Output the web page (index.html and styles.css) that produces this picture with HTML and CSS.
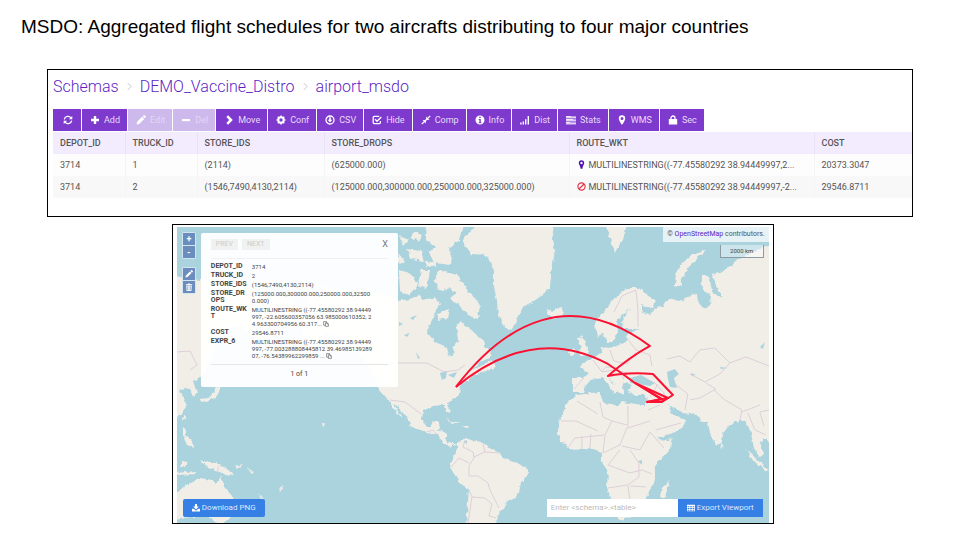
FILE: index.html
```
<!DOCTYPE html>
<html lang="en">
<head>
<meta charset="utf-8">
<title>MSDO flight schedules</title>
<link rel="stylesheet" href="styles.css">
</head>
<body>
<h1 class="title">MSDO: Aggregated flight schedules for two aircrafts distributing to four major countries</h1>

<section class="panel">
  <nav class="crumbs" aria-label="Breadcrumb">
    <a href="#">Schemas</a>
    <svg class="sep" viewBox="0 0 6 10"><path d="M1 1l4 4-4 4"/></svg>
    <a href="#">DEMO_Vaccine_Distro</a>
    <svg class="sep" viewBox="0 0 6 10"><path d="M1 1l4 4-4 4"/></svg>
    <a href="#">airport_msdo</a>
  </nav>
  <div class="toolbar">
    <button class="tool" aria-label="Refresh"><svg class="icon" viewBox="0 0 10 10"><path class="line" d="M1.3 4.4A3.7 3.7 0 0 1 8 3M8.7 5.6A3.7 3.7 0 0 1 2 7"/><path d="M9.3.9v3.4H5.9zM.7 9.1V5.7h3.4z"/></svg></button>
    <button class="tool"><svg class="icon" viewBox="0 0 10 10"><path d="M3.8 1h2.4v2.8H9v2.4H6.200V9H3.800V6.200H1V3.800h2.800z"/></svg>Add</button>
    <button class="tool" disabled><svg class="icon" viewBox="0 0 10 10"><path d="M.5 9.500l.6-2.700 5-5 2.100 2.100-5 5zM6.700 1.200l1-1q.5-.4 1 0l1.100 1.100q.4.500 0 1l-1 1z"/></svg>Edit</button>
    <button class="tool" disabled><svg class="icon" viewBox="0 0 10 10"><path d="M1 4h8v2.200H1z"/></svg>Del</button>
    <button class="tool"><svg class="icon" viewBox="0 0 10 10"><path d="M2.300 2L4.200.3 8.800 5 4.200 9.700 2.300 8 5.200 5z"/></svg>Move</button>
    <button class="tool"><svg class="icon" viewBox="0 0 10 10"><circle class="line gear" cx="5" cy="5" r="2.700"/><path class="line teeth" d="M5 .5v1.300M5 8.200v1.300M.5 5h1.300M8.200 5h1.300M1.800 1.800l1 1M7.200 7.200l1 1M1.800 8.200l1-1M7.200 2.800l1-1"/></svg>Conf</button>
    <button class="tool"><svg class="icon" viewBox="0 0 10 10"><circle class="line" cx="5" cy="5" r="4"/><path d="M4.200 2.300h1.600v2.500h1.500L5 7.400 2.700 4.800h1.500z"/></svg>CSV</button>
    <button class="tool"><svg class="icon" viewBox="0 0 10 10"><path class="line" d="M7.200 1.400H2.200q-1 0-1 1v5.200q0 1 1 1h5.200q1 0 1-1V6M3 4.300l2 2L9.300 2"/></svg>Hide</button>
    <button class="tool"><svg class="icon" viewBox="0 0 10 10"><path d="M5.200 1.600L6.500 2.800 8.700.5l.9.9-2.300 2.200 1.200 1.200-3.300.1zM4.800 8.400L3.500 7.200 1.300 9.500l-.9-.9 2.300-2.200-1.200-1.200 3.300-.1z"/><path class="line" d="M4 6l2-2"/></svg>Comp</button>
    <button class="tool"><svg class="icon" viewBox="0 0 10 10"><path fill-rule="evenodd" d="M5 .5a4.500 4.500 0 1 1 0 9 4.500 4.500 0 0 1 0-9zM4.200 1.700v1.400h1.600V1.700zM3.700 4v1h.7v2.200h-.7v1h2.700v-1h-.6V4z"/></svg>Info</button>
    <button class="tool"><svg class="icon" viewBox="0 0 10 10"><path d="M.2 7.600h1.400v1.900H.2zM2.600 6.500H4v3H2.600zM5 4.200h1.400v5.300H5zM7.600 1H9v8.500H7.600z"/></svg>Dist</button>
    <button class="tool"><svg class="icon" viewBox="0 0 10 10"><path class="soft" d="M0 1h10v2.200H0zM0 4h10v2.200H0zM0 7h10v2.200H0z"/><path d="M0 1h5v.8H0zM0 4h7v.8H0zM0 7h4v.8H0zM0 2.500h10v.7H0zM0 5.500h10v.7H0zM0 8.500h10v.7H0z"/></svg>Stats</button>
    <button class="tool"><svg class="icon" viewBox="0 0 10 10"><path fill-rule="evenodd" d="M5 .3a3.200 3.200 0 0 1 3.200 3.200C8.200 5.500 5.500 9.700 5 9.700S1.800 5.500 1.800 3.500A3.200 3.200 0 0 1 5 .3zM5 2a1.500 1.500 0 1 0 0 3 1.500 1.500 0 0 0 0-3z"/></svg>WMS</button>
    <button class="tool"><svg class="icon" viewBox="0 0 10 10"><path d="M.8 4h8.400V9.500H.8z"/><path class="line" d="M3 4.500V3a2 2 0 0 1 4 0v1.500"/></svg>Sec</button>
  </div>
  <table class="grid">
    <colgroup><col class="c-id"><col class="c-id"><col class="c-stores"><col class="c-wide"><col class="c-wide"><col></colgroup>
    <thead><tr><th>DEPOT_ID</th><th>TRUCK_ID</th><th>STORE_IDS</th><th>STORE_DROPS</th><th>ROUTE_WKT</th><th>COST</th></tr></thead>
    <tbody>
      <tr><td>3714</td><td>1</td><td>(2114)</td><td>(625000.000)</td><td><svg class="mark pin" viewBox="0 0 10 10"><path fill-rule="evenodd" d="M5 .3a3 3 0 0 1 3 3C8 5 6.200 6.500 6 9.700H4C3.800 6.500 2 5 2 3.300a3 3 0 0 1 3-3zM5 2a1.300 1.300 0 1 0 0 2.600A1.300 1.300 0 0 0 5 2z"/></svg>MULTILINESTRING((-77.45580292 38.94449997,2...</td><td>20373.3047</td></tr>
      <tr><td>3714</td><td>2</td><td>(1546,7490,4130,2114)</td><td>(125000.000,300000.000,250000.000,325000.000)</td><td><svg class="mark ban" viewBox="0 0 10 10"><circle cx="5" cy="5" r="4"/><path d="M2.200 7.800l5.600-5.600"/></svg>MULTILINESTRING((-77.45580292 38.94449997,-2...</td><td>29546.8711</td></tr>
    </tbody>
  </table>
</section>

<main class="map">
  <svg class="world" viewBox="177 227 592 296" role="img" aria-label="World map with two flight routes">
    <defs><filter id="coast" x="0" y="0" width="1" height="1" color-interpolation-filters="sRGB"><feTurbulence type="fractalNoise" baseFrequency=".2" numOctaves="2" seed="4"/><feDisplacementMap in="SourceGraphic" scale="5" xChannelSelector="R" yChannelSelector="G"/></filter></defs>
    <g class="land" filter="url(#coast)">
      <rect class="sea" x="170" y="220" width="606" height="310"/>
      <!-- North America -->
      <path d="M300 330L307 300 323 286 348 291 375 292 398 301 410 299 418 294 423 300 436 297 440 304 436 312 432 320 427 332 435 342 447 347 450 357 453 355 454 347 458 340 456 327 460 322 468 327 477 335 483 340 486 347 492 352 490 358 480 362 470 370 481 366 492 360 497 367 483 372 475 375 468 380 460 386 459 395 448 403 451 413 447 412 445 405 432 406 423 410 422 420 427 427 432 427 434 422 440 422 438 430 446 433 446 442 452 444 458 444 450 447 443 442 438 435 428 432 420 430 410 425 407 417 397 406 394 404 402 418 398 415 390 402 385 397 378 389 378 383 366 362 352 345 340 335 325 333 312 345z"/>
      <!-- South America -->
      <path d="M457 443L460 441 465 438 475 441 483 442 488 447 500 452 503 458 517 463 527 468 527 475 521 483 519 493 515 498 507 501 503 508 497 518 493 526H466L469 490 460 483 453 472 450 467 452 458 457 452z"/>
      <!-- Greenland, Iceland, Svalbard, Novaya Zemlya -->
      <path d="M463 238L470 232 477 225H554L552 240 555 250 552 270 550 287 540 297 523 308 517 320 513 328 509 330 503 325 498 313 497 300 493 283 493 270 487 255 472 254 465 248zM547 309L551 312 561 307 564 313 555 319 548 315zM605 225H627L623 240 615 252 610 238zM702 250L706 251 700 256 688 268 682 279 682 287 675 285 676 275 680 266 690 256z"/>
      <!-- Arctic islands -->
      <path d="M427 225H463L459 240 449 248 452 256 451 265 435 263 429 252 436 247 426 239zM435 275L441 270 457 275 465 286 480 305 478 319 468 315 458 304 449 298 457 293 450 288 440 291 435 283zM399 270L410 273 418 285 410 296 400 291zM421 270L430 270 427 290 418 284zM399 235L408 240 403 246zM413 232L423 235 420 241 411 238zM406 249L421 251 424 261 411 259zM398 253L405 261 398 263zM425 262L437 261 437 267 426 266zM438 313L449 309 447 318 438 320z"/>
      <!-- Eurasia -->
      <path d="M613 300L627 288 638 288 655 300 653 308 642 305 643 313 650 315 655 308 662 307 668 298 680 301 690 297 697 292 698 302 703 308 710 305 711 295 702 290 702 275 708 275 713 293 723 298 717 287 713 275 725 270 737 260 757 250 775 244V446L764 438 760 442 764 455 760 458 754 448 751 433 747 423 740 420 733 423 723 433 722 442 717 446 710 433 708 422 702 422 697 415 683 413 673 408 668 405 672 413 676 417 687 420 682 428 663 437 658 437 652 423 643 408 647 403 646 395 633 395 628 390 633 385 625 383 622 387 624 395 619 393 613 382 608 378 619 390 615 394 603 378 595 379 587 383 583 392 572 392 572 378 583 378 588 373 579 367 593 358 602 352 602 347 610 348 627 342 628 333 640 329 624 329 622 321 630 309 617 320 618 332 613 343 607 343 603 333 597 337 595 323 603 313zM577 338L583 337 589 354 579 357 581 348zM571 349L576 348 574 355 569 354z"/>
      <!-- Africa and Madagascar -->
      <path d="M577 395L600 392 603 402 618 406 622 402 643 405 650 418 658 437 663 442 673 438 668 452 655 465 655 480 647 497 637 510 630 518 618 520 612 503 607 487 608 473 602 462 602 452 590 448 572 450 560 440 558 433 560 417 568 403zM662 488L670 480 665 498 660 497z"/>
      <!-- East Asia, Japan and the Philippines -->
      <path d="M170 275L190 279 230 283 260 290 295 300 290 318 270 325 262 345 250 335 240 325 220 330 215 350 205 373 193 382 198 393 193 397 189 387 179 390 186 402 183 412 170 425zM200 399L211 397 218 385 222 386 216 398 203 402zM183 416L186 417 183 421zM183 427L187 430 185 435 192 441 193 448 187 445 183 436zM181 460L188 461 186 467 181 467z"/>
      <!-- Australia and Oceania -->
      <path d="M170 495L177 493 190 483 200 478 212 480 216 485 220 476 225 488 233 497 236 513 220 527 210 517 190 517 170 521zM201 460L210 463 217 463 226 468 235 476 226 475 219 471 208 468zM177 473L195 471 195 474 177 475zM236 466L243 464 238 469zM246 467L254 472 252 473zM279 488L284 486 280 491zM257 493L264 498 262 498zM322 424L325 424 323 426zM745 448L766 468 771 472 766 471 755 462zM721 442L724 447 721 448zM445 419L460 423 453 423zM461 426L470 426 467 428z"/>
    </g>
    <g class="sea">
      <path d="M630 378L641 375 655 383 650 386 638 384 630 383zM667 372L675 369 679 374 674 378 677 388 670 387 668 379zM638 461L642 460 642 465zM440 373L447 371 446 378 442 380zM448 375L457 372 454 378z"/>
      <path d="M691 373l5 2-4 1zM720 367l8 1-7 1zM760 347l5-5-2 7zM464 442l3-2 0 4zM416 352l4 6-2 1zM404 335l6-2-3 4zM410 318l7-3-4 5zM399 322l4 2-4 2z"/>
    </g>
    <g class="borders">
      <path d="M378 363H427L444 372 458 370 465 365M390 400L405 402 421 414M427 432L433 430 437 435M465 440L463 447 473 452 474 458 469 466 469 476 478 476 488 483 490 490 499 508M474 457L485 452 483 444M485 452L499 453M451 467L459 458 469 463M469 490L472 497 468 523M472 497L485 498 492 504 489 516 496 518"/>
      <path d="M561 421H576L598 431M577 401L598 414M600 402L603 417 612 421 627 425M628 406V428L650 421M612 421L605 435 575 438 568 448M582 436L582 449M591 434L590 448M605 436L603 453 620 445 627 428M622 446L640 450 650 432 664 448M620 450L608 465 630 473 642 470 652 474M630 450L639 463 639 477 628 485 608 488M628 486L630 500 617 508M630 486L646 487"/>
      <path d="M614 312L622 296 636 290 638 310 638 327M627 338L636 350 650 355 652 366M610 350L614 361 627 364 636 352M593 360L602 372 614 370 628 373M584 378L574 389M601 372L606 367 618 368 624 379M654 382L664 393 666 401M658 384L650 397M648 410L660 405M675 384L688 394 685 410M667 359L680 356 690 362 700 350 715 348 730 363 720 374 705 382 690 374M730 363L746 357 769 366M706 383L716 389 700 398 690 400M714 390L725 400 742 410 740 420M742 412L760 405M748 413L755 430 766 435M769 410L760 412 764 426M656 430L681 423M177 352L190 351 197 365 190 370M218 466V472"/>
    </g>
    <g class="routes">
      <path d="M456 387C505 323 570 287 650 346Q630 357 608 376 628 372 653 374L673 395 662 402 647 402 662 399 635 383"/>
      <path d="M456 387C507 345 558 337 608 364Q622 373 635 383L668 398 647 402M635 383L664 401"/>
    </g>
  </svg>

  <div class="controls">
    <div class="pair"><button aria-label="Zoom in">+</button><button aria-label="Zoom out">-</button></div>
    <div class="pair"><button aria-label="Draw"><svg viewBox="0 0 10 10"><path d="M.5 9.500l.6-2.700 5-5 2.100 2.100-5 5zM6.700 1.200l1-1q.5-.4 1 0l1.100 1.100q.4.500 0 1l-1 1z"/></svg></button><button aria-label="Delete"><svg viewBox="0 0 10 10"><path fill-rule="evenodd" d="M1 1.500h2.500L4 .5h2l.5 1H9v1H1zM1.500 3h7L8 10H2zM3 4.200V9h.7V4.200zM4.700 4.200V9h.6V4.200zM6.300 4.200V9H7V4.200z"/></svg></button></div>
  </div>

  <section class="popup">
    <div class="pager"><button disabled>PREV</button><button disabled>NEXT</button><button class="close" aria-label="Close">X</button></div>
    <dl class="facts">
      <dt>DEPOT_ID</dt><dd>3714</dd>
      <dt>TRUCK_ID</dt><dd>2</dd>
      <dt>STORE_IDS</dt><dd>(1546,7490,4130,2114)</dd>
      <dt>STORE_DR<br>OPS</dt><dd>(125000.000,300000.000,250000.000,32500<br>0.000)</dd>
      <dt>ROUTE_WK<br>T</dt><dd>MULTILINESTRING ((-77.45580292 38.94449<br>997, -22.605600357056 63.985000610352, 2<br>4.963300704956 60.317... <svg class="copy" viewBox="0 0 10 10"><path d="M6 3V1H1v6h3M4 3h3l2 2v4H4zM7 3v2h2"/></svg></dd>
      <dt>COST</dt><dd>29546.8711</dd>
      <dt>EXPR_6</dt><dd>MULTILINESTRING ((-77.45580292 38.94449<br>997, -77.003288808445812 39.46985139289<br>07, -76.54389962299859 ... <svg class="copy" viewBox="0 0 10 10"><path d="M6 3V1H1v6h3M4 3h3l2 2v4H4zM7 3v2h2"/></svg></dd>
    </dl>
    <p class="count">1 of 1</p>
  </section>

  <p class="credit">© <a href="#">OpenStreetMap</a> contributors.</p>
  <div class="scale">2000 km</div>
  <button class="action download"><svg viewBox="0 0 10 10"><path d="M3.700 0h2.600v3.200h2.200L5 6.800 1.500 3.200h2.200zM0 6h2.300L5 8.300 7.700 6H10v3.500H0z"/></svg>Download PNG</button>
  <form class="export">
    <input type="text" placeholder="Enter &lt;schema&gt;.&lt;table&gt;" aria-label="Schema and table">
    <button type="button" class="action"><svg viewBox="0 0 10 10"><path fill-rule="evenodd" d="M0 .8h10v8.400H0zM.8 2.800v1.300h2.200V2.800zM3.900 2.800v1.300h2.200V2.800zM7 2.800v1.300h2.200V2.800zM.8 5v1.300h2.200V5zM3.900 5v1.300h2.200V5zM7 5v1.300h2.200V5zM.8 7.100v1.300h2.200V7.100zM3.900 7.100v1.300h2.200V7.100zM7 7.100v1.300h2.200V7.100z"/></svg>Export Viewport</button>
  </form>
</main>
</body>
</html>
```
FILE: styles.css
```
* { box-sizing: border-box; }
body { margin: 0; background: #fff; color: #000; font-family: Roboto, sans-serif; }
button, input { font: inherit; border: 0; margin: 0; border-radius: 0; }
a { color: #5b1fc4; text-decoration: none; }

.title { margin: 0; padding: 16px 21px 0; font: 400 19px/22px "Liberation Sans", sans-serif; }

.panel { margin: 31px 47px 0; padding: 6px 0 18px 5px; border: 1px solid #000; overflow: hidden; }
.crumbs { display: flex; align-items: center; gap: 8px; height: 20px; font-size: 16px; font-weight: 300; }
.sep { width: 5px; height: 9px; fill: none; stroke: #bbb; stroke-width: 1; }
.toolbar { display: flex; gap: 1px; margin: 13px 0 1px; }
.tool { display: flex; align-items: center; justify-content: center; gap: 4px; min-width: 28px; height: 22px; padding: 0 7px 0 8px; background: #7e3acd; color: #eadcfa; font-size: 9px; white-space: nowrap; }
.tool:disabled { background: #cdb9ec; color: #e3d6f5; }
.icon { width: 10px; height: 10px; fill: #fff; }
.line { fill: none; stroke: #fff; stroke-width: 1.3; }
.gear { stroke-width: 2; }
.teeth { stroke-width: 1.5; }
.soft { opacity: .5; }

.grid { width: 100%; table-layout: fixed; border-collapse: collapse; color: #555; font-size: 9px; text-align: left; }
.c-id { width: 72px; }
.c-stores { width: 127px; }
.c-wide { width: 245px; }
.grid th, .grid td { height: 22px; padding: 0 0 0 7px; border-left: 1px solid #e9e3f1; white-space: nowrap; }
.grid th { background: #f3ecfe; font-weight: 500; }
.grid td { background: #fdfdfd; border-color: #f5f5f5; }
.grid tr:nth-child(2) td { background: #f8f8f8; }
.grid th:first-child, .grid td:first-child { border-left: 0; }
.mark { width: 9px; height: 9px; margin-right: 3px; vertical-align: -1px; }
.pin { fill: #4d0fb8; }
.ban { fill: none; stroke: #e0354b; stroke-width: 1.3; }

.map { position: relative; width: 62.7%; margin: 7px 0 0 17.9%; padding: 2px 4px 0; border: 1px solid #000; }
.world { display: block; width: 100%; background: #abd3de; }
.land { fill: #f1eee8; }
.sea { fill: #abd3de; }
.borders { fill: none; stroke: #d8c7d4; stroke-width: 1; stroke-linejoin: round; opacity: .8; }
.routes { fill: none; stroke: #fb1232; stroke-width: 2; stroke-linejoin: round; }

.controls { position: absolute; left: 9px; top: 7px; display: grid; gap: 8px; }
.pair { display: grid; gap: 1px; padding: 1px; border-radius: 2px; background: #d3e6ef; }
.pair button { display: grid; place-items: center; width: 12px; height: 12px; padding: 0; background: #6a8dbd; color: #fff; font-size: 9px; font-weight: 700; line-height: 12px; }
.pair svg { width: 8px; height: 8px; fill: #fff; }

.popup { position: absolute; left: 28px; top: 8px; width: 197px; padding: 6px 10px 9px; border-radius: 2px; background: rgba(255, 255, 255, .95); color: #444; font-size: 7px; line-height: 7px; }
.pager { display: flex; gap: 4px; align-items: center; padding-bottom: 8px; border-bottom: 1px solid #eef0f1; }
.pager button { height: 11px; padding: 0 5px; background: #f0f1f1; color: #ccc; line-height: 11px; }
.pager .close { margin-left: auto; padding: 0; background: none; color: #777; font-size: 9px; }
.facts { display: grid; grid-template-columns: 37px 1fr; gap: 2px 4px; margin: 4px 0 5px; white-space: nowrap; }
.facts dt { font-weight: 700; }
.facts dd { margin: 0; font-size: 6px; }
.copy { width: 6px; height: 6px; fill: none; stroke: #555; stroke-width: 1; vertical-align: -1px; }
.count { margin: 0; padding-top: 6px; border-top: 1px solid #e3e6e7; text-align: center; }

.credit { position: absolute; right: 4px; top: 2px; margin: 0; padding: 0 4px; background: rgba(255, 255, 255, .7); color: #555; font-size: 7px; line-height: 15px; }
.scale { position: absolute; right: 9px; top: 20px; width: 44px; height: 13px; border: 1px solid #8d9ba3; border-top: 0; background: rgba(255, 255, 255, .4); color: #444; font-size: 6px; line-height: 12px; text-align: center; }
.action { display: flex; align-items: center; justify-content: center; gap: 2px; height: 18px; padding: 0 9px; background: #367fe5; color: #dbe9ff; font-size: 8px; white-space: nowrap; }
.action svg { width: 8px; height: 8px; fill: #fff; }
.download { position: absolute; left: 10px; bottom: 6px; border-radius: 2px; }
.export { position: absolute; right: 10px; bottom: 6px; display: flex; }
.export input { width: 131px; height: 18px; padding: 0 4px; background: #fff; color: #555; font-size: 8px; }
.export input::placeholder { color: #bbb; }
```
